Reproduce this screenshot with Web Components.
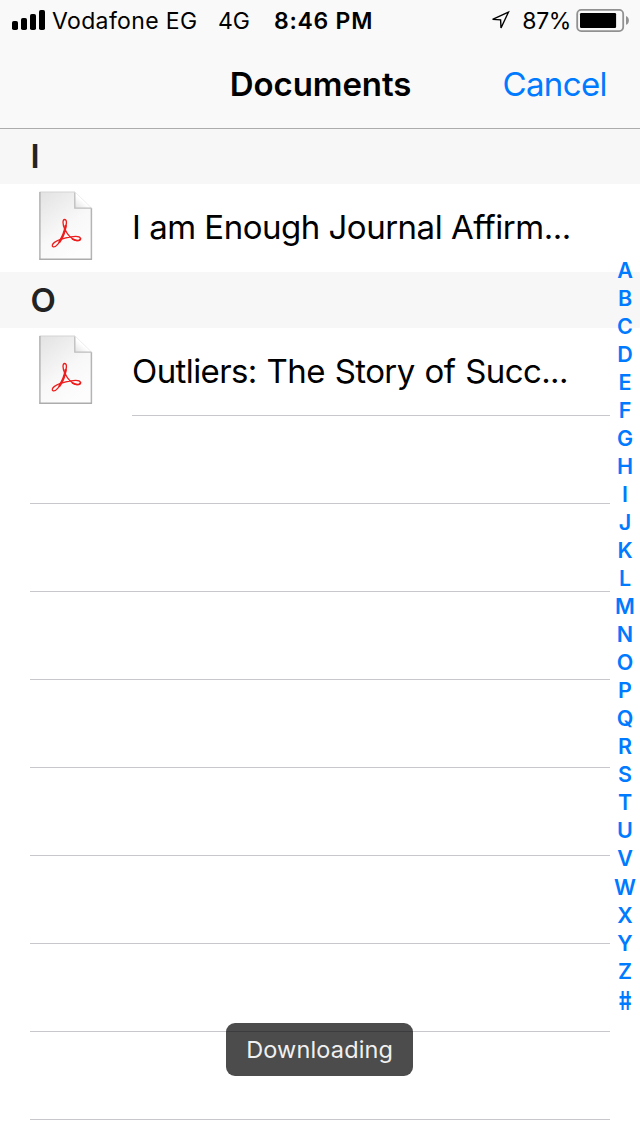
<!DOCTYPE html>
<html lang="en">
<head>
<meta charset="utf-8">
<title>Documents</title>
<style>
    body {
        margin: 0;
        background: #fff;
        font-family: Inter, "Liberation Sans", sans-serif;
        color: #000;
    }
</style>
</head>
<body>
<doc-picker>
    <status-bar slot="bar" carrier="Vodafone EG" network="4G" time="8:46 PM" battery="87"></status-bar>
    <nav-bar slot="bar">
        <span slot="title">Documents</span>
        <span slot="action">Cancel</span>
    </nav-bar>

    <doc-section heading="I">
        <doc-row style="--tracking: -0.5px">I am Enough Journal Affirm...</doc-row>
    </doc-section>
    <doc-section heading="O">
        <doc-row line style="--tracking: -0.6px; --gap: 1.2px">Outliers: The Story of Succ...</doc-row>
    </doc-section>
    <empty-rows count="8"></empty-rows>

    <index-bar slot="overlay" letters="ABCDEFGHIJKLMNOPQRSTUVWXYZ#"></index-bar>
    <toast-message slot="overlay">Downloading</toast-message>
</doc-picker>

<script>
function render(host, html) {
    const root = host.attachShadow({ mode: 'open' });
    root.innerHTML = html;
    return root;
}

customElements.define('doc-picker', class extends HTMLElement {
    constructor() {
        super();
        render(this, `
            <style>
                :host {
                    display: flex;
                    flex-direction: column;
                    position: relative;
                    width: 640px;
                    height: 1136px;
                    overflow: hidden;
                }
                header { height: 128px; background: #f9f9f9; box-shadow: 0 1px 0 #acacac; z-index: 1; }
                main { flex: 1; }
            </style>
            <header><slot name="bar"></slot></header>
            <main><slot></slot></main>
            <slot name="overlay"></slot>
        `);
    }
});

customElements.define('status-bar', class extends HTMLElement {
    constructor() {
        super();
        const level = Number.parseInt(this.getAttribute('battery'));
        render(this, `
            <style>
                :host {
                    display: flex;
                    align-items: center;
                    justify-content: space-between;
                    height: 40px;
                    padding: 0 10px 0 12px;
                    font-size: 23px;
                    line-height: 38px;
                    white-space: pre;
                }
                div { display: flex; align-items: center; }
                span { padding-top: 2px; }
                svg { display: block; }
                .carrier { margin-left: 7px; letter-spacing: 0.35px; }
                .network { margin-left: 20.5px; }
                .time { margin-left: 24px; font-weight: 600; letter-spacing: 0.75px; }
                .arrow { margin-right: 12px; }
                .percent { margin-right: 5px; letter-spacing: -0.4px; }
            </style>
            <div>
                <svg width="33" height="20" viewBox="0 0 33 20">
                    <rect x="0" y="11" width="6" height="9" rx="1.8"/>
                    <rect x="9" y="8" width="6" height="12" rx="1.8"/>
                    <rect x="18" y="4" width="6" height="16" rx="1.8"/>
                    <rect x="27" y="0" width="6" height="20" rx="1.8"/>
                </svg>
                <span class="carrier">${this.getAttribute('carrier')}</span>
                <span class="network">${this.getAttribute('network')}</span>
                <span class="time">${this.getAttribute('time')}</span>
            </div>
            <div>
                <svg class="arrow" width="22" height="20" viewBox="0 0 22 20">
                    <path d="M20.4 2.2 4.6 9.4 12.6 9.8 13 18Z" fill="none" stroke="#000" stroke-width="1.4"/>
                </svg>
                <span class="percent">${level}%</span>
                <svg width="54" height="24" viewBox="0 0 54 24">
                    <rect x="1.2" y="1.9" width="46" height="21.2" rx="4" fill="none" stroke="#919191" stroke-width="1.8"/>
                    <rect x="4" y="5" width="${level * 0.415}" height="15" rx="1.2"/>
                    <path d="M50 8a4.8 4.8 0 0 1 0 8.8Z" fill="#919191"/>
                </svg>
            </div>
        `);
    }
});

customElements.define('nav-bar', class extends HTMLElement {
    constructor() {
        super();
        render(this, `
            <style>
                :host {
                    display: grid;
                    grid-template-columns: 1fr auto 1fr;
                    align-items: center;
                    height: 88px;
                    padding: 0 33px 0 32px;
                    font-size: 33px;
                    line-height: 88px;
                }
                .title { grid-column: 2; font-weight: 600; letter-spacing: -0.1px; margin-left: 2px; }
                .action { justify-self: end; color: #007aff; letter-spacing: -0.6px; }
            </style>
            <div class="title"><slot name="title"></slot></div>
            <div class="action"><slot name="action"></slot></div>
        `);
    }
});

customElements.define('doc-section', class extends HTMLElement {
    constructor() {
        super();
        render(this, `
            <style>
                :host { display: block; }
                h2 {
                    margin: 0;
                    padding-left: 30.5px;
                    height: 56px;
                    line-height: 56px;
                    font-size: 33px;
                    font-weight: 600;
                    color: #232323;
                    background: #f7f7f7;
                }
            </style>
            <h2>${this.getAttribute('heading')}</h2>
            <slot></slot>
        `);
    }
});

customElements.define('pdf-icon', class extends HTMLElement {
    constructor() {
        super();
        render(this, `
            <style>
                :host { display: block; width: 56px; height: 72px; }
                svg { display: block; }
            </style>
            <svg width="56" height="72" viewBox="0 0 56 72">
                <defs>
                    <linearGradient id="paper" x1="0" y1="0" x2="0.6" y2="1">
                        <stop offset="0" stop-color="#e2e2e2"/>
                        <stop offset="0.6" stop-color="#f8f8f8"/>
                        <stop offset="1" stop-color="#fdfdfd"/>
                    </linearGradient>
                    <linearGradient id="fold" x1="0" y1="1" x2="0.7" y2="0.2">
                        <stop offset="0" stop-color="#e2e2e2"/>
                        <stop offset="0.6" stop-color="#fff"/>
                    </linearGradient>
                </defs>
                <path d="M1.5 2H37L53.5 18V69.5H1.5Z" fill="url(#paper)"/>
                <path d="M1.5 2H37" stroke="#d4d4d4" fill="none"/>
                <path d="M1.9 2V69.5M53.4 18V69.5" stroke="#b4b4b4" stroke-width="1.5" fill="none"/>
                <path d="M1.2 69.3H54" stroke="#acacac" stroke-width="1.6" fill="none"/>
                <path d="M37 2 53.5 18H37Z" fill="url(#fold)"/>
                <path d="M37 2 53.5 18" stroke="#eee" fill="none"/>
                <path d="M36.8 2.5V18.2H53.5" stroke="#bdbdbd" stroke-width="1.3" fill="none"/>
                <!-- looped strokes of the emblem -->
                <g fill="none" stroke="#ee1c1c" stroke-linecap="round" stroke-linejoin="round">
                    <path d="M26.6 29.5C24.4 29.5 24.6 34.5 26.6 38.8C29 43.8 33.5 49.6 38.5 50.6C41.2 51.1 42.9 49.9 42.6 48.5C42 46.6 37.5 46.2 33 46.9C27.5 47.7 20.5 49.6 16.5 52.4C14 54.2 13.6 56.3 15.2 56.9C18 57.6 22.3 52 25 45.5C27.3 39.5 29 33.8 28.3 31C28 30 27.5 29.5 26.6 29.5Z" stroke-width="1.3"/>
                    <path d="M27.6 36C27 40.5 25 46.5 21.5 51.8" stroke-width="2.3"/>
                    <path d="M34.5 48.9C38.5 51.3 42 50.8 42.4 48.8" stroke-width="1.7"/>
                </g>
            </svg>
        `);
    }
});

customElements.define('doc-row', class extends HTMLElement {
    constructor() {
        super();
        render(this, `
            <style>
                :host { display: flex; height: 88px; padding: 0 30px 0 38px; }
                pdf-icon { margin: 6px 38px 0 0; }
                .name {
                    flex: 1;
                    box-sizing: border-box;
                    font-size: 33px;
                    line-height: 87px;
                    white-space: nowrap;
                    letter-spacing: var(--tracking, 0);
                    word-spacing: var(--gap, 0);
                }
                :host([line]) .name { border-bottom: 1px solid #c8c7cc; }
            </style>
            <pdf-icon></pdf-icon>
            <div class="name"><slot></slot></div>
        `);
    }
});

customElements.define('empty-rows', class extends HTMLElement {
    constructor() {
        super();
        const count = Number.parseInt(this.getAttribute('count'));
        render(this, `
            <style>
                :host { display: block; padding: 0 30px; }
                div { box-sizing: border-box; height: 88px; border-bottom: 1px solid #c8c7cc; }
            </style>
            ${'<div></div>'.repeat(count)}
        `);
    }
});

customElements.define('index-bar', class extends HTMLElement {
    constructor() {
        super();
        const letters = [...this.getAttribute('letters')];
        render(this, `
            <style>
                :host {
                    position: absolute;
                    top: 255.5px;
                    right: 0;
                    display: flex;
                    flex-direction: column;
                    width: 30px;
                    font-size: 21.5px;
                    font-weight: 600;
                    line-height: 28px;
                    text-align: center;
                    color: #007aff;
                }
                span { height: 28.06px; }
                /* the hash stands upright, narrower and taller than the letters */
                span:last-child { font-size: 26px; line-height: 31px; transform: scaleX(0.78) skewX(9deg); }
            </style>
            ${letters.map(letter => `<span>${letter}</span>`).join('')}
        `);
    }
});

customElements.define('toast-message', class extends HTMLElement {
    constructor() {
        super();
        render(this, `
            <style>
                :host {
                    position: absolute;
                    top: 1023px;
                    left: 226.3px;
                    width: 186.7px;
                    height: 53px;
                    border-radius: 9px;
                    background: rgba(0, 0, 0, 0.7);
                    color: #f0f0f0;
                    font-size: 23.5px;
                    line-height: 53px;
                    text-align: center;
                    letter-spacing: 0.15px;
                }
            </style>
            <slot></slot>
        `);
    }
});
</script>
</body>
</html>
